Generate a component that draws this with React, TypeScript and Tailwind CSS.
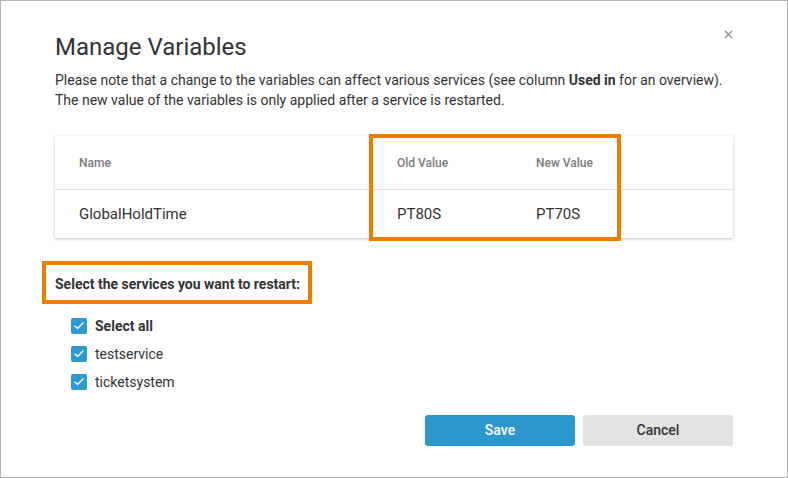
import { Check } from 'lucide-react'

const services = [
  { label: 'Select all', bold: true },
  { label: 'testservice', bold: false },
  { label: 'ticketsystem', bold: false },
]

export default function App() {
  return (
    <div
      className="w-[788px] h-[478px] bg-white border border-[#b4b4b4] text-[#333333] relative"
      style={{ fontFamily: 'Roboto, "Noto Sans", sans-serif' }}
    >
      {/* Close */}
      <button className="absolute left-[722px] top-[28px] w-[10px] h-[10px] flex items-center justify-center">
        <svg width="9" height="9" viewBox="0 0 9 9">
          <path d="M1 1 L8 8 M8 1 L1 8" stroke="#8a8a8a" strokeWidth="1.2" />
        </svg>
      </button>

      <div className="pl-[54px] pr-[54px] pt-[30px]">
        <h2 className="text-[24px] leading-[32px] font-normal text-[#333]">Manage Variables</h2>
        <p className="mt-[7px] text-[14px] leading-[20px] text-[#333]">
          Please note that a change to the variables can affect various services (see column{' '}
          <span className="font-bold">Used in</span> for an overview).
          <br />
          The new value of the variables is only applied after a service is restarted.
        </p>

        {/* Table */}
        <div className="relative mt-[26px] w-[678px] bg-white shadow-[0_1px_3px_rgba(0,0,0,0.25)]">
          <div className="grid grid-cols-[318px_139px_105px_1fr] h-[54px] items-center border-b border-[#e0e0e0] text-[12px] font-medium text-[#7a7a7a]">
            <div className="pl-[24px]">Name</div>
            <div className="pl-[24px]">Old Value</div>
            <div className="pl-[24px]">New Value</div>
            <div />
          </div>
          <div className="grid grid-cols-[318px_139px_105px_1fr] h-[48px] items-center text-[15px] text-[#333]">
            <div className="pl-[24px]">GlobalHoldTime</div>
            <div className="pl-[24px]">PT80S</div>
            <div className="pl-[24px]">PT70S</div>
            <div />
          </div>
          {/* highlight */}
          <div className="absolute left-[314px] top-[-2px] w-[252px] h-[107px] border-[4px] border-[#f07d00] pointer-events-none" />
        </div>

        {/* Services */}
        <div className="relative mt-[36px]">
          <div className="text-[14px] leading-[20px] font-bold text-[#333]">Select the services you want to restart:</div>
          <div className="absolute left-[-13px] top-[-13px] w-[270px] h-[43px] border-[4px] border-[#f07d00] pointer-events-none" />
        </div>

        <div className="mt-[18px] pl-[16px] flex flex-col">
          {services.map((s) => (
            <label key={s.label} className="h-[28px] flex items-center gap-[8px]">
              <span className="w-[16px] h-[16px] rounded-[2px] bg-[#2e99cf] flex items-center justify-center">
                <Check size={12} strokeWidth={2.5} color="white" />
              </span>
              <span className={`text-[14px] text-[#333] ${s.bold ? 'font-bold' : ''}`}>{s.label}</span>
            </label>
          ))}
        </div>

        <div className="mt-[19px] flex justify-end gap-[8px] w-[678px]">
          <button className="w-[150px] h-[31px] rounded-[3px] bg-[#2b97cd] text-white text-[14px] font-medium">
            Save
          </button>
          <button className="w-[150px] h-[31px] rounded-[3px] bg-[#e3e3e3] text-[#333] text-[14px] font-medium">
            Cancel
          </button>
        </div>
      </div>
    </div>
  )
}
